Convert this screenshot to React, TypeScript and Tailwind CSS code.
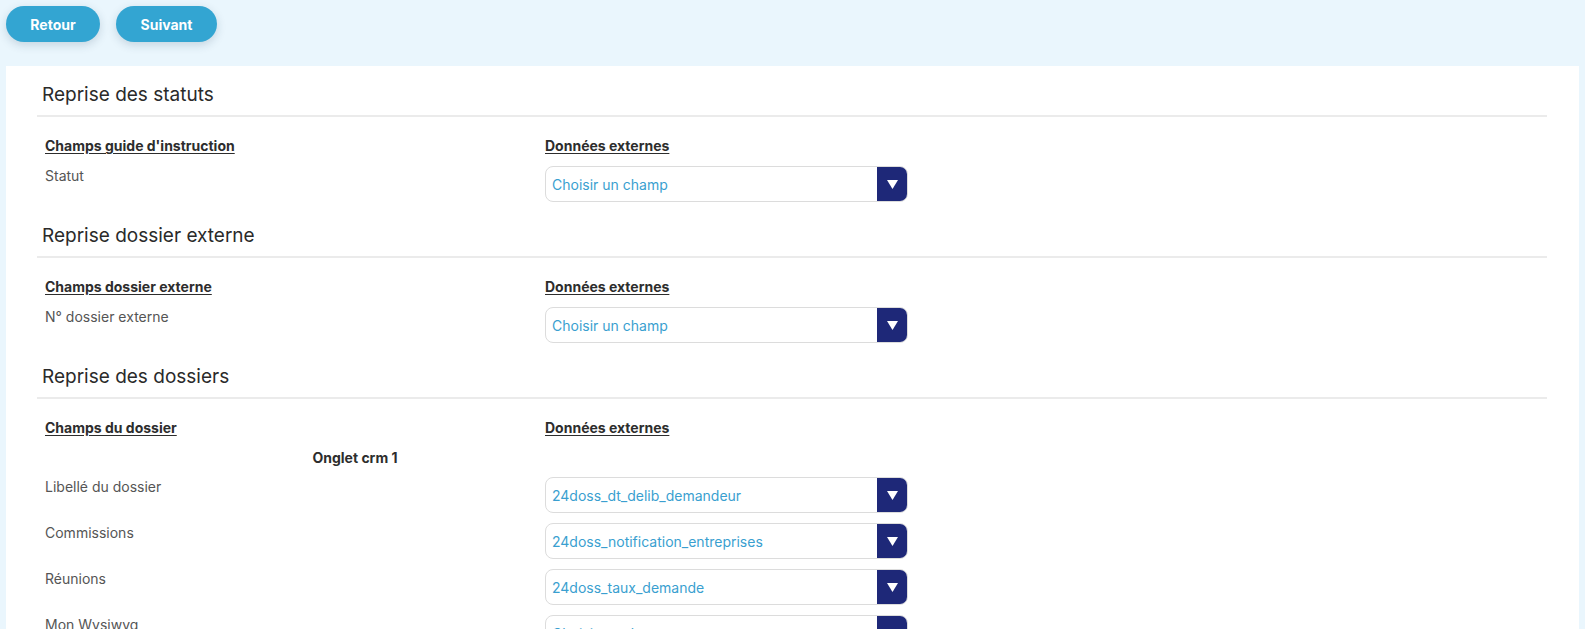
import { ReactNode } from "react"

const font = { fontFamily: "Inter, 'Noto Sans', sans-serif" }

function Select({ value }: { value?: string }) {
  return (
    <div className="flex h-9 w-[363px] overflow-hidden rounded-lg border border-[#dcdcdc] bg-white">
      <div className="flex flex-1 items-center pl-[6px] text-[14px] text-[#3a9fd0]">
        {value ?? "Choisir un champ"}
      </div>
      <div className="flex w-[30px] items-center justify-center bg-[#1e2878]">
        <svg width="11" height="9" viewBox="0 0 11 9">
          <path d="M0 0 H11 L5.5 9 Z" fill="#fff" />
        </svg>
      </div>
    </div>
  )
}

function Section({ title, children }: { title: string; children: ReactNode }) {
  return (
    <section>
      <div className="border-b-2 border-[#ebebeb] pb-2 pl-[5px]">
        <h2 className="text-[19px] leading-6 font-normal text-[#2a2a2a]">{title}</h2>
      </div>
      <div className="mt-[19px] flex flex-col gap-[10px] pl-2">{children}</div>
    </section>
  )
}

function HeaderRow({ left }: { left: string }) {
  return (
    <div className="flex h-5 text-[14px] leading-5 font-bold text-[#2d2d2d]">
      <div className="w-[500px]">
        <span className="underline underline-offset-2">{left}</span>
      </div>
      <span className="underline underline-offset-2">Données externes</span>
    </div>
  )
}

function Row({ label, value }: { label: string; value?: string }) {
  return (
    <div className="flex items-start">
      <div className="w-[500px] text-[14px] leading-5 text-[#555]">{label}</div>
      <Select value={value} />
    </div>
  )
}

export default function App() {
  return (
    <div className="min-h-screen bg-[#eaf6fd]" style={font}>
      <div className="flex gap-4 px-[6px] pt-[6px]">
        <button className="h-9 w-[94px] rounded-full bg-[#33a5d2] text-[14px] font-bold text-white shadow-[0_3px_10px_rgba(30,60,90,0.18)]">
          Retour
        </button>
        <button className="h-9 w-[101px] rounded-full bg-[#33a5d2] text-[14px] font-bold text-white shadow-[0_3px_10px_rgba(30,60,90,0.18)]">
          Suivant
        </button>
      </div>

      <div className="mx-[6px] mt-6 flex min-h-[600px] flex-col gap-[22px] bg-white pr-8 pl-[31px] pt-[17px] pb-10">
        <Section title="Reprise des statuts">
          <HeaderRow left="Champs guide d'instruction" />
          <Row label="Statut" />
        </Section>

        <Section title="Reprise dossier externe">
          <HeaderRow left="Champs dossier externe" />
          <Row label="N° dossier externe" />
        </Section>

        <Section title="Reprise des dossiers">
          <HeaderRow left="Champs du dossier" />
          <div className="w-[620px] text-center text-[14px] leading-[19px] font-bold text-[#2d2d2d]">Onglet crm 1</div>
          <Row label="Libellé du dossier" value="24doss_dt_delib_demandeur" />
          <Row label="Commissions" value="24doss_notification_entreprises" />
          <Row label="Réunions" value="24doss_taux_demande" />
          <Row label="Mon Wysiwyg" />
        </Section>
      </div>
    </div>
  )
}
